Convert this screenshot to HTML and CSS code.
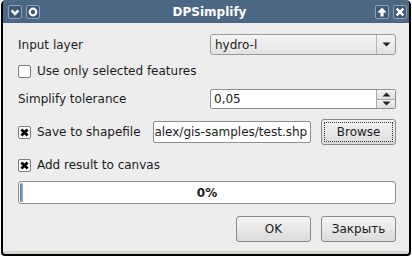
FILE: index.html
```html
<!DOCTYPE html>
<html lang="en">
<head>
  <meta charset="UTF-8" />
  <title>DPSimplify</title>
  <link rel="stylesheet" href="styles.css">
</head>
<body>
  <div class="window">
    <div class="titlebar">
      <div class="tb-group">
        <span class="tb-btn"><svg width="12" height="12" viewBox="0 0 12 12"><polyline points="2.6,4.4 6,7.8 9.4,4.4" fill="none" stroke="#fff" stroke-width="2.6"/></svg></span>
        <span class="tb-btn"><svg width="12" height="12" viewBox="0 0 12 12"><circle cx="6" cy="6" r="3.3" fill="none" stroke="#fff" stroke-width="2.2"/></svg></span>
      </div>
      <div class="tb-title">DPSimplify</div>
      <div class="tb-group">
        <span class="tb-btn"><svg width="12" height="12" viewBox="0 0 12 12"><polygon points="6,1.6 10.6,6.4 7.6,6.4 7.6,10.4 4.4,10.4 4.4,6.4 1.4,6.4" fill="#fff"/></svg></span>
        <span class="tb-btn"><svg width="12" height="12" viewBox="0 0 12 12"><path d="M2.6 2.6 L9.4 9.4 M9.4 2.6 L2.6 9.4" stroke="#fff" stroke-width="2.6"/></svg></span>
      </div>
    </div>

    <div class="content">
      <div class="row row-combo">
        <span class="label">Input layer</span>
        <div class="combo">
          <span class="combo-text">hydro-l</span>
          <span class="combo-arrow"><svg width="9" height="5" viewBox="0 0 9 5"><polygon points="0.5,0.5 8.5,0.5 4.5,4.5" fill="#222"/></svg></span>
        </div>
      </div>

      <div class="row row-check">
        <span class="check"></span>
        <span class="check-label">Use only selected features</span>
      </div>

      <div class="row row-spin">
        <span class="label">Simplify tolerance</span>
        <div class="spin">
          <span class="spin-text">0,05</span>
          <span class="spin-btns">
            <span class="spin-btn"><svg width="9" height="5" viewBox="0 0 9 5"><polygon points="0.5,4.5 8.5,4.5 4.5,0.5" fill="#222"/></svg></span>
            <span class="spin-btn"><svg width="9" height="5" viewBox="0 0 9 5"><polygon points="0.5,0.5 8.5,0.5 4.5,4.5" fill="#222"/></svg></span>
          </span>
        </div>
      </div>

      <div class="row row-file">
        <span class="check checked"><svg width="9" height="9" viewBox="0 0 9 9"><path d="M1.4 1.4 L7.6 7.6 M7.6 1.4 L1.4 7.6" stroke="#000" stroke-width="2.8"/></svg></span>
        <span class="check-label file-label">Save to shapefile</span>
        <div class="line-edit"><span>alex/gis-samples/test.shp</span></div>
        <button class="btn btn-focus"><span class="focus-rect">Browse</span></button>
      </div>

      <div class="row row-check2">
        <span class="check checked"><svg width="9" height="9" viewBox="0 0 9 9"><path d="M1.4 1.4 L7.6 7.6 M7.6 1.4 L1.4 7.6" stroke="#000" stroke-width="2.8"/></svg></span>
        <span class="check-label">Add result to canvas</span>
      </div>

      <div class="progress">
        <span class="progress-chunk"></span>
        <span class="progress-text">0%</span>
      </div>

      <div class="row row-buttons">
        <button class="btn">OK</button>
        <button class="btn">Закрыть</button>
      </div>
    </div>
  </div>
</body>
</html>
```

FILE: styles.css
```css
body {
  margin: 0;
  background: #fff;
  font-family: 'DejaVu Sans', sans-serif;
  font-size: 12px;
  color: #1c1c1c;
}
.window {
  margin-left: 1px;
  width: 406px;
  height: 254px;
  border: 2px solid #000;
  border-top: none;
  border-radius: 5px 5px 4px 4px;
  background: #d6d6d1;
  overflow: hidden;
}
.titlebar {
  height: 23px;
  background: #4b6783;
  display: flex;
  align-items: center;
  justify-content: space-between;
  padding: 0 2px 0 5px;
}
.tb-group { display: flex; gap: 4px; }
.tb-btn {
  width: 12px;
  height: 12px;
  border: 1px solid #8ca4bc;
  border-radius: 2px;
  background: #3f5973;
  display: flex;
}
.tb-title {
  color: #fff;
  font-weight: bold;
  font-size: 12px;
  margin-left: 4px;
}
.content {
  background: #ededed;
  height: 217px;
  padding: 11px 13px 0 15px;
}
.row { display: flex; align-items: center; }
.label { width: 192px; }
.row-combo { height: 21px; }
.row-check { height: 20px; margin-top: 6px; }
.row-spin { height: 20px; margin-top: 8px; }
.row-file { height: 26px; margin-top: 10px; }
.row-check2 { height: 20px; margin-top: 10px; }
.combo {
  flex: 1;
  height: 19px;
  border: 1px solid #9a9a9a;
  border-radius: 3px;
  background: linear-gradient(#f6f6f6, #e2e2e2);
  display: flex;
  align-items: center;
}
.combo-text { flex: 1; padding-left: 4px; }
.combo-arrow {
  width: 18px;
  height: 19px;
  border-left: 1px solid #b4b4b4;
  display: flex;
  align-items: center;
  justify-content: center;
}
.check {
  width: 11px;
  height: 11px;
  border: 1px solid #7c7c7c;
  border-radius: 2px;
  background: #fff;
  display: flex;
  align-items: center;
  justify-content: center;
}
.check-label { margin-left: 6px; }
.spin {
  flex: 1;
  height: 18px;
  border: 1px solid #8f8f8f;
  border-radius: 2px;
  background: #fff;
  display: flex;
}
.spin-text { flex: 1; padding-left: 3px; line-height: 18px; }
.spin-btns {
  width: 18px;
  display: flex;
  flex-direction: column;
  border-left: 1px solid #a8a8a8;
}
.spin-btn {
  flex: 1;
  background: linear-gradient(#f4f4f4, #dedede);
  display: flex;
  align-items: center;
  justify-content: center;
}
.spin-btn + .spin-btn { border-top: 1px solid #a8a8a8; }
.file-label { width: 116px; }
.line-edit {
  width: 157px;
  height: 20px;
  border: 1px solid #8f8f8f;
  border-radius: 2px;
  background: #fff;
  overflow: hidden;
  display: flex;
  justify-content: flex-end;
  align-items: center;
  white-space: nowrap;
}
.line-edit span { padding-right: 3px; }
.btn {
  font-family: 'DejaVu Sans', sans-serif;
  font-size: 12px;
  color: #1c1c1c;
  width: 75px;
  height: 26px;
  border: 1px solid #8a8a8a;
  border-radius: 3px;
  background: linear-gradient(#f4f4f4, #dcdcdc);
  padding: 0;
}
.row-file .btn { margin-left: 10px; }
.btn-focus { padding: 2px; }
.focus-rect {
  display: flex;
  height: 100%;
  align-items: center;
  justify-content: center;
  border: 1px dotted #333;
  box-sizing: border-box;
}
.progress {
  margin-top: 6px;
  height: 21px;
  border: 1px solid #8f8f8f;
  border-radius: 3px;
  background: #fff;
  position: relative;
  display: flex;
  align-items: center;
  justify-content: center;
}
.progress-chunk {
  position: absolute;
  left: 1px;
  top: 1px;
  width: 3px;
  height: 19px;
  border-radius: 2px;
  background: linear-gradient(90deg, #5c7b9c, #9ab2cc);
}
.progress-text { font-weight: bold; }
.row-buttons {
  margin-top: 12px;
  justify-content: flex-end;
  gap: 10px;
}
```
